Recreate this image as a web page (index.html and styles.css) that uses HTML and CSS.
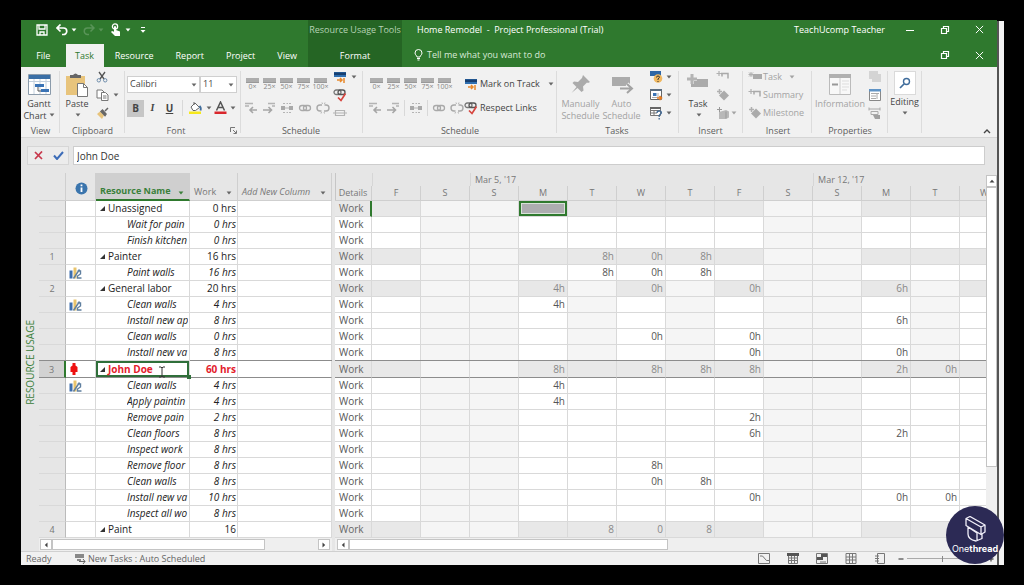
FILE: index.html
```html
<!DOCTYPE html>
<html lang="en">
<head>
<meta charset="utf-8">
<title>Home Remodel - Project Professional (Trial)</title>
<link rel="stylesheet" href="styles.css">
</head>
<body>
<svg class="defs" aria-hidden="true">
  <symbol id="down" viewBox="0 0 6 4"><path d="M.6.6h4.8L3 3.4z" fill="currentColor"/></symbol>
  <symbol id="restore" viewBox="0 0 10 10"><path d="M1.500 3.500h5v5h-5zM3.500 3v-1.500h5v5h-1.500" fill="none" stroke="currentColor" stroke-width="1.200"/></symbol>
  <symbol id="close" viewBox="0 0 10 10"><path d="M1 1l8 8M9 1l-8 8" stroke="currentColor" stroke-width="1.100"/></symbol>
  <symbol id="outdent" viewBox="0 0 14 14"><path d="M1 2.500h8M1 5h4" stroke="#b4b4b4" stroke-width="1.300"/><path d="M13 9H6.500M9 6L6 9l3 3" fill="none" stroke="#a6a6a6" stroke-width="1.600"/></symbol>
  <symbol id="indent" viewBox="0 0 14 14"><path d="M6 2.500h7M10 5h3" stroke="#b4b4b4" stroke-width="1.300"/><path d="M1 9h8M6.500 6l3 3-3 3" fill="none" stroke="#a6a6a6" stroke-width="1.600"/></symbol>
  <symbol id="split" viewBox="0 0 14 14"><path d="M1 5h4v4H1zM9 5h4v4H9z" fill="#a9a9a9"/><path d="M5 7h4M3 2.500h2M6.500 2.500h1.500M9 2.500h2M3 11.500h2M6.500 11.500h1.500M9 11.500h2" stroke="#b4b4b4"/></symbol>
  <symbol id="link" viewBox="0 0 14 14"><rect x="1.500" y="4.500" width="7" height="5" rx="2.500" fill="none" stroke="#a9a9a9" stroke-width="1.300"/><rect x="5.500" y="4.500" width="7" height="5" rx="2.500" fill="none" stroke="#a9a9a9" stroke-width="1.300"/></symbol>
  <symbol id="unlink" viewBox="0 0 14 14"><path d="M6 4H4a3 3 0 0 0 0 6h1.500M8.500 4H10a3 3 0 0 1 0 6H8" fill="none" stroke="#a9a9a9" stroke-width="1.400"/><path d="M6 1.500l.5 1.500M9 1.500L8.500 3M5 12.500l.5-1.500M8.500 12.500L8 11" stroke="#b4b4b4"/></symbol>
  <symbol id="mark" viewBox="0 0 14 14"><path d="M1 2h12v5H1z" fill="#2f6fb0"/><path d="M1 2.500h12v2.500H1z" fill="#173f70"/><path d="M4 10h5M7 8l2 2-2 2M11 8v5" fill="none" stroke="#e8892b" stroke-width="1.500"/></symbol>
  <symbol id="respect" viewBox="0 0 14 14"><rect x="1" y="2" width="7" height="4.500" rx="2.200" fill="none" stroke="#777" stroke-width="1.300"/><rect x="5" y="2" width="7" height="4.500" rx="2.200" fill="none" stroke="#555" stroke-width="1.300"/><path d="M5 9.500l3 3 4.500-7" fill="none" stroke="#d6453f" stroke-width="1.700"/></symbol>
  <symbol id="inactive" viewBox="0 0 14 14"><path d="M2.500 4.500h9v5h-9zM0 7h14" fill="none" stroke="#b4b4b4" stroke-width="1.200"/></symbol>
  <symbol id="summary" viewBox="0 0 14 14"><path d="M3 1v5M.5 3.500h5" stroke="#b0b0b0" stroke-width="1.200"/><path d="M5 3.500h7v5M6 3.500v3" fill="none" stroke="#a9a9a9" stroke-width="1.500"/></symbol>
  <symbol id="milestone" viewBox="0 0 14 14"><path d="M8 2.500l5 5-5 5-5-5z" fill="#ababab"/><path d="M3.500 1v5M1 3.500h5" stroke="#b0b0b0" stroke-width="1.500"/></symbol>
  <symbol id="addtask" viewBox="0 0 14 14"><path d="M5 4h9v5H5z" fill="#ababab"/><path d="M3 2v5M.5 4.500h5M1 2.500l4 4M5 2.500l-4 4" stroke="#b0b0b0"/></symbol>
  <symbol id="deliver" viewBox="0 0 14 14"><path d="M3 6l7-2 3 1.500v6l-3 1.500H3z" fill="#b8b8b8"/><path d="M3.500 1v5M1 3.500h5M10 5.500v7" stroke="#999"/></symbol>
  <symbol id="assign" viewBox="0 0 13 12"><path d="M.5 3.500h3v8h-3z" fill="#3e6fae"/><path d="M4.500.5h3v11h-3z" fill="#e9c46c"/><path d="M4.500 11.500l6-9M8.500 4h3v3l-3 2v2h4" fill="none" stroke="#5f7f9f" stroke-width="1.400"/></symbol>
  <symbol id="over" viewBox="0 0 8 14"><path d="M2.500 1h3v2.500L7.500 5v5H5.500v3h-3v-3h-2V5l2-1.500z" fill="#ee1111"/></symbol>
</svg>

<div class="screen">
<main class="app">
  <header class="head">
    <div class="head-left">
      <div class="quick">
        <button aria-label="Save"><svg width="12" height="12" viewBox="0 0 12 12"><path d="M1 1h10v10H1zM3 1v4h6V1M4 11V8h4v3" fill="none" stroke="#fff" stroke-width="1.300"/></svg></button>
        <button class="wide" aria-label="Undo"><svg width="12" height="12" viewBox="0 0 12 12"><path d="M1 4h6.500a3 3 0 0 1 0 6.500H6M4.500.5L1 4l3.500 3.500" fill="none" stroke="#fff" stroke-width="1.700"/></svg><svg class="dn"><use href="#down"/></svg></button>
        <button class="wide faded" aria-label="Redo"><svg width="12" height="12" viewBox="0 0 12 12"><path d="M11 4H4.500a3 3 0 0 0 0 6.500H6M7.500.5L11 4 7.500 7.500" fill="none" stroke="#fff" stroke-width="1.500"/></svg><svg class="dn"><use href="#down"/></svg></button>
        <button class="wide" aria-label="Touch or mouse mode"><svg width="12" height="14" viewBox="0 0 12 14"><circle cx="5" cy="3.500" r="2.600" fill="none" stroke="#fff" stroke-width="1.300"/><path d="M4 3.500q1-1 2 0V7l4 1.500V13H5L1 9l1-1 2 .8z" fill="#fff"/></svg><svg class="dn"><use href="#down"/></svg></button>
        <button aria-label="Customize toolbar"><svg width="6" height="8" viewBox="0 0 6 8"><path d="M1 1.500h4" stroke="#fff"/><path d="M.5 4h5L3 6.800z" fill="#fff"/></svg></button>
      </div>
      <nav class="tabs">
        <button>File</button><button class="on">Task</button><button>Resource</button><button>Report</button><button>Project</button><button>View</button>
      </nav>
    </div>
    <div class="context">
      <span>Resource Usage Tools</span>
      <button>Format</button>
    </div>
    <div class="head-right">
      <div class="line">
        <h1>Home Remodel&nbsp; -&nbsp; Project Professional (Trial)</h1>
        <span class="user">TeachUcomp Teacher</span>
        <button aria-label="Minimize"><svg width="10" height="10" viewBox="0 0 10 10"><path d="M1 5.500h8" stroke="#fff"/></svg></button>
        <button aria-label="Restore"><svg width="10" height="10"><use href="#restore"/></svg></button>
        <button aria-label="Close"><svg width="9" height="9"><use href="#close"/></svg></button>
      </div>
      <div class="line">
        <button class="tell"><svg width="9" height="12" viewBox="0 0 9 12"><path d="M3 8C3 6.500 1 6 1 4a3.500 3.500 0 0 1 7 0c0 2-2 2.500-2 4zM3 9.500h3M3.500 11h2" fill="none" stroke="#fff"/></svg>Tell me what you want to do</button>
        <button aria-label="Restore document"><svg width="10" height="10"><use href="#restore"/></svg></button>
        <button aria-label="Close document"><svg width="9" height="9"><use href="#close"/></svg></button>
      </div>
    </div>
  </header>

  <section class="ribbon" aria-label="Task ribbon">
    <div class="group g-view">
      <div class="tools">
        <button class="big"><svg width="26" height="24" viewBox="0 0 26 24"><path d="M2.500 1.500h22v20h-22z" fill="#fff" stroke="#8b9bab"/><path d="M3 2h21v4H3z" fill="#3a6ea5"/><path d="M3 8.500h21M8 6v15M14 6v15M20 6v15" stroke="#c3d0dd"/><path d="M9 11h9v3H9zM15 16h8v3h-8z" fill="#3a73b5"/><path d="M12 14v4h3" fill="none" stroke="#555"/></svg><span>Gantt<br>Chart<svg class="dn"><use href="#down"/></svg></span></button>
      </div>
      <h2>View</h2>
    </div>
    <div class="group g-clip">
      <div class="tools">
        <button class="big"><svg width="24" height="24" viewBox="0 0 24 24"><path d="M1 3h19v19H1z" fill="#e8c47c"/><path d="M5 2h3q2.500-3 5 0h3v3H5z" fill="#666"/><path d="M12.500 10.500h6l4 4v9h-10z" fill="#fff" stroke="#777"/><path d="M18.500 10.500v4h4" fill="none" stroke="#777"/></svg><span>Paste<br><svg class="dn"><use href="#down"/></svg></span></button>
        <div class="stack">
          <button aria-label="Cut"><svg width="12" height="12" viewBox="0 0 12 12"><path d="M3 1l5 7M9 1L4 8" stroke="#555" stroke-width="1.300"/><circle cx="2.800" cy="9.300" r="1.700" fill="none" stroke="#6d8cab"/><circle cx="9.200" cy="9.300" r="1.700" fill="none" stroke="#6d8cab"/></svg></button>
          <button aria-label="Copy"><svg width="13" height="12" viewBox="0 0 13 12"><path d="M1 1h5l2 2v6H1z" fill="#fff" stroke="#777"/><path d="M5.500 3.500h4l2.500 2.500v5.500H5.500zM7 7h3.500M7 9h3.500" fill="#fff" stroke="#777"/></svg><svg class="dn"><use href="#down"/></svg></button>
          <button aria-label="Format Painter"><svg width="13" height="13" viewBox="0 0 13 13"><path d="M1 7l3-2.500 4 4L6 12z" fill="#e8c47c"/><path d="M5 4.500l4 4 1-1.500-3.500-4zM9 4l3-3" fill="#666" stroke="#666" stroke-width="1.500"/></svg></button>
        </div>
      </div>
      <h2>Clipboard</h2>
    </div>
    <div class="group g-font">
      <div class="tools rows">
        <div class="row joined">
          <label class="pick face"><select aria-label="Font"><option>Calibri</option></select><svg class="dn"><use href="#down"/></svg></label>
          <label class="pick size"><select aria-label="Font size"><option>11</option></select><svg class="dn"><use href="#down"/></svg></label>
        </div>
        <div class="row">
          <button class="fmt on"><b>B</b></button><button class="fmt"><i>I</i></button><button class="fmt"><u>U</u></button>
          <span class="sep"></span>
          <button class="color" aria-label="Background Color"><svg width="15" height="14" viewBox="0 0 15 14"><path d="M1 10.500h12V13H1z" fill="#f6e81c"/><path d="M3 6l4-4 4.500 4.500L7.500 9.500H5zM6 1v3" fill="#fff" stroke="#666"/><path d="M11.500 5q2 2 1 4.500" fill="none" stroke="#3f6c9b" stroke-width="1.800"/></svg><svg class="dn"><use href="#down"/></svg></button>
          <button class="color" aria-label="Font Color"><svg width="13" height="14" viewBox="0 0 13 14"><path d="M.5 10.500h12V13H.5z" fill="#d9262c"/><path d="M2.500 9.500L6.500 1l4 8.500M4 6.500h5" fill="none" stroke="#555" stroke-width="1.500"/></svg><svg class="dn"><use href="#down"/></svg></button>
        </div>
      </div>
      <h2>Font</h2>
      <button class="launch" aria-label="Font settings"><svg width="7" height="7" viewBox="0 0 7 7"><path d="M.5 5V.5H5M3 3l3 3M6.500 3.500v3h-3" fill="none" stroke="#777"/></svg></button>
    </div>
    <div class="group g-sched">
      <div class="tools">
        <div class="rows">
          <div class="row pcts">
            <button><i class="bar"></i>0×</button><button><i class="bar"></i>25×</button><button><i class="bar"></i>50×</button><button><i class="bar"></i>75×</button><button><i class="bar"></i>100×</button>
          </div>
          <div class="row fives">
            <button aria-label="Outdent"><svg class="ic"><use href="#outdent"/></svg></button><button aria-label="Indent"><svg class="ic"><use href="#indent"/></svg></button><button aria-label="Split"><svg class="ic"><use href="#split"/></svg></button><button aria-label="Link"><svg class="ic"><use href="#link"/></svg></button><button aria-label="Unlink"><svg class="ic"><use href="#unlink"/></svg></button>
          </div>
        </div>
        <div class="stack">
          <button aria-label="Mark on Track"><svg class="ic"><use href="#mark"/></svg><svg class="dn"><use href="#down"/></svg></button>
          <button aria-label="Respect Links"><svg class="ic"><use href="#respect"/></svg></button>
          <button aria-label="Inactivate"><svg class="ic"><use href="#inactive"/></svg></button>
        </div>
      </div>
      <h2>Schedule</h2>
    </div>
    <div class="group g-sched2">
      <div class="tools">
        <div class="rows">
          <div class="row pcts">
            <button><i class="bar"></i>0×</button><button><i class="bar"></i>25×</button><button><i class="bar"></i>50×</button><button><i class="bar"></i>75×</button><button><i class="bar"></i>100×</button>
          </div>
          <div class="row fives">
            <button aria-label="Outdent"><svg class="ic"><use href="#outdent"/></svg></button><button aria-label="Indent"><svg class="ic"><use href="#indent"/></svg></button><span class="sep"></span><button aria-label="Split"><svg class="ic"><use href="#split"/></svg></button><span class="sep"></span><button aria-label="Link"><svg class="ic"><use href="#link"/></svg></button><button aria-label="Unlink"><svg class="ic"><use href="#unlink"/></svg></button>
          </div>
        </div>
        <div class="rows words">
          <div class="row"><button><svg class="ic"><use href="#mark"/></svg>Mark on Track<svg class="dn far"><use href="#down"/></svg></button></div>
          <div class="row"><button><svg class="ic"><use href="#respect"/></svg>Respect Links</button></div>
        </div>
      </div>
      <h2>Schedule</h2>
    </div>
    <div class="group g-tasks">
      <div class="tools">
        <button class="big off"><svg width="22" height="24" viewBox="0 0 22 24"><path d="M13 2l7 7-2 1-1-.5-4 4 .5 4-2 1.500-4-4-6 5 5-6-4-4L4 8.500l4 .5 4-4z" fill="#ababab"/></svg><span>Manually<br>Schedule</span></button>
        <button class="big off"><svg width="24" height="24" viewBox="0 0 24 24"><path d="M2 4h18v9H2z" fill="#ababab"/><path d="M10 15.500h11M17 11l5 4.500-5 4.500" fill="none" stroke="#f1f1f1" stroke-width="4"/><path d="M10 15.500h11M17 11l5 4.500-5 4.500" fill="none" stroke="#a3a3a3" stroke-width="2"/></svg><span>Auto<br>Schedule</span></button>
        <div class="stack">
          <button aria-label="Inspect"><svg class="ic" viewBox="0 0 14 14"><path d="M1 1h11v5H1z" fill="#2e66a5"/><circle cx="9" cy="8.500" r="4.300" fill="#f0b860"/><path d="M7.500 7.500q0-1.500 1.500-1.500t1.500 1.300L9 9v1M9 11v1" fill="none" stroke="#333"/></svg><svg class="dn"><use href="#down"/></svg></button>
          <button aria-label="Move"><svg class="ic" viewBox="0 0 14 14"><path d="M1.500 1.500h11v10h-11z" fill="#fff" stroke="#666"/><path d="M1 1h12v2H1z" fill="#5b6d80"/><path d="M4 5h3.500v3H4z" fill="#3a73b5"/><path d="M9 5v5M3 9.500h5" stroke="#aaa"/><path d="M8 10h4M10.500 8l2 2-2 2" fill="none" stroke="#e57a1f" stroke-width="1.600"/></svg><svg class="dn"><use href="#down"/></svg></button>
          <button aria-label="Mode"><svg class="ic" viewBox="0 0 14 14"><path d="M1.500 1.500h10v8h-10zM1 4.500h10M1 7h7M5 4v5" fill="#fff" stroke="#777"/><path d="M1 1h11v2H1z" fill="#666"/><path d="M8 7q0-2 2.200-2t2.200 2L10.200 9.500V11M10.200 12v1.500" fill="none" stroke="#436a94" stroke-width="1.300"/></svg><svg class="dn"><use href="#down"/></svg></button>
        </div>
      </div>
      <h2>Tasks</h2>
    </div>
    <div class="group g-insert">
      <div class="tools">
        <button class="big"><svg width="24" height="24" viewBox="0 0 24 24"><path d="M5 6h17v8H5z" fill="#ababab"/><path d="M6 1v10M1 6h10" stroke="#f1f1f1" stroke-width="4"/><path d="M6 1v10M1 6h10" stroke="#b4b4b4" stroke-width="3"/></svg><span>Task<br><svg class="dn"><use href="#down"/></svg></span></button>
        <div class="stack">
          <button aria-label="Summary"><svg class="ic"><use href="#summary"/></svg></button>
          <button aria-label="Milestone"><svg class="ic"><use href="#milestone"/></svg></button>
          <button class="off" aria-label="Deliverable"><svg class="ic"><use href="#deliver"/></svg><svg class="dn"><use href="#down"/></svg></button>
        </div>
      </div>
      <h2>Insert</h2>
    </div>
    <div class="group g-insert2">
      <div class="tools">
        <div class="stack off">
          <button><svg class="ic"><use href="#addtask"/></svg>Task<svg class="dn far"><use href="#down"/></svg></button>
          <button><svg class="ic"><use href="#summary"/></svg>Summary</button>
          <button><svg class="ic"><use href="#milestone"/></svg>Milestone</button>
        </div>
      </div>
      <h2>Insert</h2>
    </div>
    <div class="group g-props">
      <div class="tools">
        <button class="big off"><svg width="24" height="24" viewBox="0 0 24 24"><path d="M1.500 1.500h21v20h-21z" fill="#f8f8f8" stroke="#bbb"/><path d="M1 1h22v4H1z" fill="#b0b0b0"/><path d="M12 5v16" stroke="#ccc"/><path d="M4 11.500h6" stroke="#999" stroke-width="2"/><path d="M14 8h7M14 11h7M14 14h7M14 17h5" stroke="#ddd"/></svg><span>Information</span></button>
        <div class="stack">
          <button aria-label="Notes"><svg class="ic" viewBox="0 0 14 14"><path d="M1 1h9v8H1zM4 4h9v8H4z" fill="#d4d4d4"/></svg></button>
          <button aria-label="Details"><svg class="ic" viewBox="0 0 14 14"><path d="M1.500 1.500h11v11h-11z" fill="#fff" stroke="#888"/><path d="M1 1h12v2.500H1z" fill="#5f93c5"/><path d="M3 5.500h8M3 8h5M3 10.500h5M9 6v5" stroke="#aaa"/></svg></button>
          <button aria-label="Add to Timeline"><svg class="ic" viewBox="0 0 14 14"><path d="M1 1.500v3M12 1.500v3M1 3h11M3 5.500h7v3H3z" fill="none" stroke="#aaa"/><path d="M5 9h7v4H7z" fill="#a0a0a0"/></svg></button>
        </div>
      </div>
      <h2>Properties</h2>
    </div>
    <div class="group g-edit">
      <div class="tools">
        <button class="big"><span class="lens"><svg width="12" height="12" viewBox="0 0 12 12"><circle cx="7.500" cy="4.500" r="3" fill="none" stroke="#3f6c9b" stroke-width="1.400"/><path d="M5 7l-4 4" stroke="#3f6c9b" stroke-width="1.700"/></svg></span><span>Editing<br><svg class="dn"><use href="#down"/></svg></span></button>
      </div>
    </div>
    <button class="collapse" aria-label="Collapse ribbon"><svg width="8" height="6" viewBox="0 0 8 6"><path d="M1 5l3-3 3 3" fill="none" stroke="#444" stroke-width="1.400"/></svg></button>
  </section>

  <section class="entry">
    <div class="confirm">
      <button aria-label="Cancel"><svg width="9" height="9" viewBox="0 0 9 9"><path d="M1 1l7 7M8 .5L1 8" stroke="#c8384c" stroke-width="1.700"/></svg></button>
      <button aria-label="Enter"><svg width="11" height="9" viewBox="0 0 11 9"><path d="M1 4.500L4 8l6-7" fill="none" stroke="#3c6cb8" stroke-width="2"/></svg></button>
    </div>
    <input type="text" aria-label="Entry" value="John Doe">
  </section>

  <section class="work">
    <div class="viewname"><span>RESOURCE USAGE</span></div>
    <div class="pane sheet">
      <table>
        <colgroup><col class="c-id"><col class="c-ind"><col class="c-name"><col class="c-work"><col></colgroup>
        <thead><tr>
          <th></th>
          <th class="info"><svg width="13" height="13" viewBox="0 0 13 13"><circle cx="6.500" cy="6.500" r="6" fill="#3b75ad"/><path d="M6.500 2.500v1.800M6.500 5.500V10" stroke="#fff" stroke-width="1.800"/></svg></th>
          <th class="name">Resource Name<svg class="dn"><use href="#down"/></svg></th>
          <th>Work<svg class="dn"><use href="#down"/></svg></th>
          <th class="add">Add New Column<svg class="dn"><use href="#down"/></svg></th>
        </tr></thead>
        <tbody id="sheet"></tbody>
      </table>
      <div class="hscroll"><button aria-label="Scroll left"><svg width="4" height="6" viewBox="0 0 4 6"><path d="M3.500.5v5L.8 3z" fill="#444"/></svg></button><i class="thumb"></i><i class="track"></i><button aria-label="Scroll right"><svg width="4" height="6" viewBox="0 0 4 6"><path d="M.5.5v5L3.200 3z" fill="#444"/></svg></button></div>
    </div>
    <div class="pane usage">
      <div class="clip">
        <table>
          <colgroup><col class="c-det"><col span="13" class="c-day"></colgroup>
          <thead>
            <tr class="weeks"><th></th><th colspan="2"></th><th colspan="7">Mar 5, '17</th><th colspan="4">Mar 12, '17</th></tr>
            <tr class="days" id="days"><th>Details</th></tr>
          </thead>
          <tbody id="usage"></tbody>
        </table>
      </div>
      <div class="hscroll"><button aria-label="Scroll left"><svg width="4" height="6" viewBox="0 0 4 6"><path d="M3.500.5v5L.8 3z" fill="#444"/></svg></button><i class="thumb"></i><i class="track"></i></div>
    </div>
    <div class="vscroll"><button aria-label="Scroll up"><svg width="6" height="4" viewBox="0 0 6 4"><path d="M.5 3.500h5L3 .8z" fill="#444"/></svg></button><i class="thumb"></i><i class="track"></i></div>
  </section>

  <footer class="status">
    <span class="ready">Ready</span>
    <span class="mode"><svg width="11" height="10" viewBox="0 0 11 10"><path d="M0 0h9v4H0zM2 5h4v2H2z" fill="#888"/><path d="M4 7.500h6M8 5l2 2.500L8 10" fill="none" stroke="#666"/></svg>New Tasks : Auto Scheduled</span>
    <button aria-label="Gantt Chart"><svg width="12" height="11" viewBox="0 0 12 11"><path d="M.5.5h11v10H.5zM2 3h2.500l4 4.500H11" fill="none" stroke="#777"/></svg></button>
    <button aria-label="Task Usage"><svg width="12" height="11" viewBox="0 0 12 11"><path d="M1.500.5h9v10h-9zM1 5h10M1 7.500h10M4.500 3v7M7.500 3v7" fill="none" stroke="#777"/><path d="M0 0h12v3H0z" fill="#555"/></svg></button>
    <button aria-label="Team Planner"><svg width="12" height="11" viewBox="0 0 12 11"><path d="M.5.5h11v10H.5z" fill="none" stroke="#777"/><path d="M5 1h6v3H5zM1 4h6v3H1z" fill="#555"/><path d="M4 9h6" stroke="#777"/></svg></button>
    <button aria-label="Resource Sheet"><svg width="12" height="11" viewBox="0 0 12 11"><path d="M1 .5h10v10H1zM1 4h10M1 7h10M4.500.5v10M7.500.5v10" fill="none" stroke="#777"/></svg></button>
    <button aria-label="Report"><svg width="12" height="11" viewBox="0 0 12 11"><path d="M3.500.5h7v10h-7zM1 3h4M1 5.500h4M1 8h4" fill="none" stroke="#777"/></svg></button>
    <button class="minus" aria-label="Zoom out"><svg width="6" height="6" viewBox="0 0 6 6"><path d="M.5 3h5" stroke="#555" stroke-width="1.300"/></svg></button>
    <input type="range" aria-label="Zoom" value="46">
    <button class="plus" aria-label="Zoom in"><svg width="6" height="6" viewBox="0 0 6 6"><path d="M.5 3h5M3 .5v5" stroke="#555" stroke-width="1.300"/></svg></button>
  </footer>
</main>
<div class="edge"></div>
<div class="badge">
  <svg width="24" height="28" viewBox="0 0 24 28"><path d="M3 2.500l4-2L22 9v7l-4 2.500L3 9.500zM3 2.500L18 11l4-2M18 11v7.500M5 11v7c0 4 3 6 8 7l6-2.500v-4.500M14 17v8M5 11l9 6" fill="none" stroke="#f2f0fa" stroke-width="1.300" stroke-linejoin="round"/></svg>
  <span>One<b>thread</b></span>
</div>
</div>
<script src="app.js"></script>
</body>
</html>
```
FILE: styles.css
```css
* { box-sizing: border-box; }
body { margin: 0; background: #000; color: #444; font: 9px/12px "Open Sans", "Noto Sans", sans-serif; }
h1, h2 { margin: 0; font-size: 9px; font-weight: 400; }
button { display: flex; align-items: center; justify-content: center; margin: 0; padding: 0; border: 0; background: none; color: inherit; font: inherit; }
svg { flex: none; display: block; }
.defs { position: absolute; width: 0; height: 0; }
.dn { width: 6px; height: 4px; color: #666; }
.ic { width: 14px; height: 14px; }
.rows, .stack { display: flex; flex-direction: column; }
.row { display: flex; align-items: center; height: 24px; }
.sep { width: 1px; height: 16px; background: #d8d8d8; }

.screen { position: relative; display: flex; padding: 20px 20px 20px 21px; }
.app { flex: 1; min-width: 0; display: flex; flex-direction: column; background: #e6e6e6; }
.edge { width: 7px; margin-top: 1px; background: #f2f2f2; border-left: 2px solid #555; }

/* title bar and tabs */
.head { display: flex; height: 47px; background: #2f792e; color: #fff; }
.head button { color: #fff; }
.head .dn { color: #fff; }
.head-left { width: 287px; }
.quick { display: flex; align-items: center; height: 24px; padding: 0 0 4px 14px; gap: 5px; }
.quick button { width: 14px; height: 16px; }
.quick .wide { width: 20px; gap: 3px; margin-left: 2px; }
.quick button:last-child { margin-left: 1px; }
.faded { opacity: .2; }
.tabs { display: flex; height: 23px; }
.tabs button { padding: 0 11px; }
.tabs button:first-child { width: 45px; }
.tabs .on { width: 39px; padding: 0; background: #f1f1f1; color: #2f792e; }
.head .tabs .on { color: #2f792e; }
.context { width: 94px; display: flex; flex-direction: column; background: #256524; text-align: center; }
.context span { height: 24px; padding-top: 4px; color: #b5d3b4; white-space: nowrap; }
.context button { height: 23px; }
.head-right { flex: 1; display: flex; flex-direction: column; }
.line { display: flex; align-items: center; height: 24px; }
.line:first-child { padding-bottom: 4px; }
.line h1 { margin-left: 15px; white-space: nowrap; }
.line button { width: 35px; height: 18px; }
.user { margin-left: auto; margin-right: 7px; white-space: nowrap; }
.line .tell { width: auto; margin: 0 auto 0 12px; gap: 4px; color: #d9ead8; white-space: nowrap; }

/* ribbon */
.ribbon { display: flex; height: 71px; background: #f1f1f1; border-bottom: 1px solid #d5d5d5; }
.group { position: relative; flex: none; display: flex; flex-direction: column; }
.group::after { content: ""; position: absolute; right: 0; top: 4px; bottom: 4px; width: 1px; background: #dcdcdc; }
.tools { display: flex; flex: none; height: 58px; }
.tools.rows, .tools > .rows { padding-top: 5px; }
.group h2 { text-align: center; color: #5d5d5d; }
.big { flex-direction: column; justify-content: flex-start; padding-top: 6px; gap: 1px; line-height: 12px; white-space: nowrap; }
.big .dn { display: inline-block; vertical-align: 2px; margin-left: 2px; }
.off, .off .dn { color: #a3a3a3; }
.stack { padding-top: 1px; }
.stack button { height: 18px; justify-content: flex-start; gap: 4px; white-space: nowrap; }
.g-view { width: 39px; }
.g-view .big { width: 36px; }
.g-clip { width: 65px; }
.g-clip .big { width: 34px; }
.g-clip .stack { margin-left: 2px; }
.g-font { width: 116px; }
.g-font .tools { padding-left: 2px; }
.g-font h2 { padding-right: 14px; }
.pick { position: relative; display: block; height: 17px; }
.pick select { appearance: none; width: 100%; height: 100%; padding: 0 2px; border: 1px solid #cfcfcf; border-radius: 0; background: #fff; color: #444; font: inherit; }
.pick .dn { position: absolute; right: 3px; top: 7px; }
.face { width: 73px; }
.size { width: 37px; }
.fmt { width: 17px; height: 17px; font-size: 10px; }
.fmt + .sep { margin: 0 4px; }
.fmt.on { background: #c6c6c6; }
.fmt i { font-family: "Liberation Serif", serif; font-weight: 700; }
.fmt u { font-weight: 700; }
.color { width: 25px; gap: 3px; }
.launch { position: absolute; right: 4px; bottom: 3px; }
.g-sched { width: 122px; padding-left: 3px; }
.g-sched h2, .g-sched2 h2 { padding-right: 5px; }
.pcts button { flex-direction: column; width: 17px; color: #888; font-size: 7px; line-height: 8px; }
.bar { width: 13px; height: 5px; background: #adadad; border-bottom: 1px solid #999; }
.g-sched .fives { gap: 4px; }
.g-sched .stack { margin-left: 3px; }
.g-sched2 { width: 194px; padding-left: 5px; }
.g-sched2 .fives { gap: 4px; }
.words button { gap: 2px; white-space: nowrap; }
.dn.far { margin-left: 6px; }
.g-tasks { width: 122px; padding-left: 3px; }
.g-tasks h2 { padding-right: 5px; }
.g-tasks .big { width: 41px; }
.g-tasks .stack { margin-left: 7px; }
.g-tasks .stack button { gap: 3px; }
.g-insert { width: 64px; padding-left: 3px; }
.g-insert h2, .g-insert2 h2 { padding-right: 4px; }
.g-insert .big { width: 32px; }
.g-insert .stack { margin-left: 2px; }
.g-insert .stack button { gap: 1px; }
.g-insert2 { width: 69px; padding-left: 5px; }
.g-insert2 .stack button { gap: 1px; }
.g-props { width: 76px; }
.g-props .big { width: 56px; }
.g-edit { width: 34px; }
.g-edit .big { width: 33px; padding-top: 4px; }
.lens { display: flex; align-items: center; justify-content: center; width: 22px; height: 24px; background: #fff; border: 1px solid #dadada; }
.collapse { margin: auto 5px 2px auto; width: 10px; height: 8px; }

/* entry bar */
.entry { display: flex; gap: 4px; height: 35px; padding: 8px 12px 8px 6px; }
.confirm { display: flex; width: 42px; border: 1px solid #d6d6d6; background: #ececec; }
.confirm button { flex: 1; }
.entry input { flex: 1; min-width: 0; padding: 0 3px; border: 1px solid #cdcdcd; background: #fff; color: #333; font: 10px "Open Sans", sans-serif; }

/* sheets */
.work { display: flex; }
.viewname { display: flex; align-items: center; justify-content: center; width: 18px; color: #3a803a; font-size: 10px; }
.viewname span { writing-mode: vertical-rl; transform: rotate(180deg); white-space: nowrap; }
.pane { display: flex; flex-direction: column; }
.sheet { width: 293px; }
.usage { flex: 1; min-width: 0; border-left: 3px solid #e6e6e6; box-shadow: inset 1px 0 #c6c6c6; }
.clip { overflow: hidden; display: flex; }
table { border-collapse: separate; border-spacing: 0; table-layout: fixed; font-size: 10px; line-height: 15px; }
.sheet table { width: 293px; }
.usage table { flex: none; width: 674px; }
.c-id { width: 27px; }
.c-ind { width: 30px; }
.c-name { width: 94px; }
.c-work { width: 48px; }
.c-det { width: 37px; }
.c-day { width: 49px; }
th, td { padding: 0; height: 16px; border: 0 solid #d9d9d9; border-width: 0 1px 1px 0; font-weight: 400; white-space: nowrap; }
.sheet th { position: relative; height: 28px; padding: 9px 0 0 4px; text-align: left; color: #777; border-color: #cfcfcf; font-size: 9px; }
.sheet th .dn { position: absolute; right: 5px; bottom: 5px; }
.sheet th.info { padding: 4px 0 0 9px; }
.sheet th.name { background: #cfcfcf; color: #3a803a; font-weight: 700; border-bottom: 2px solid #2f792e; }
.sheet th.name .dn { bottom: 4px; color: #3a803a; }
.sheet th.add { font-style: italic; }
.sheet td { background: #fff; color: #222; }
.sheet td:first-child { background: #e6e6e6; color: #777; font-size: 9px; text-align: center; border-right-color: #bbb; }
.sheet td:nth-child(2) svg { margin-left: 3px; }
.sheet td:nth-child(4) { padding-right: 1px; text-align: right; }
.nm { display: block; overflow: hidden; margin: 0 1px 0 4px; }
.nm svg { display: inline-block; margin-right: 3px; vertical-align: 1px; }
.child .nm { margin-left: 31px; }
.sheet .child td { font-style: italic; }
.picked td { height: 17px; border-bottom-color: #8c8c8c; box-shadow: 0 -1px #8c8c8c; }
.sheet .picked td:first-child { background: #d2d2d2; border-right: 2px solid #2f792e; }
.sheet .picked td:nth-child(3), .sheet .picked td:nth-child(4) { color: #e3202b; font-weight: 700; }
.sheet .picked td:nth-child(3) { position: relative; box-shadow: inset 0 0 0 2px #2f6f3a; }
.sheet .picked td:nth-child(3)::after { content: ""; position: absolute; right: -2px; bottom: -2px; width: 4px; height: 4px; background: #2f6f3a; }
.caret { position: absolute; left: 62px; top: 5px; }
.usage th { color: #777; border-color: #cfcfcf; }
.usage .weeks th { height: 13px; padding-left: 4px; border-width: 0 0 0 1px; border-color: #d6d6d6; text-align: left; font-size: 9px; line-height: 13px; }
.usage .weeks th:first-child { border: 0; }
.usage .days th { height: 15px; font-size: 9px; line-height: 14px; }
.usage td { background: #fff; padding-right: 2px; color: #555; text-align: right; }
.usage td:first-child { padding-left: 4px; text-align: left; }
.usage .sum td { background: #e8e8e8; color: #888; }
.usage td.idle, .usage .sum td.idle { background: #f5f5f5; }
.usage .sum td:first-child { color: #666; }
.usage tr.first td:first-child { border-right: 2px solid #2f792e; }
.usage .sum td.cursor { background: #adadb0; box-shadow: inset 0 0 0 2px #2f792e, inset 0 0 0 3px #d8e2d8; }

/* scroll bars */
.hscroll { display: flex; height: 13px; padding: 1px 2px 1px 1px; background: #efefef; }
.hscroll button { width: 12px; border: 1px solid #c4c4c4; background: #fff; }
.hscroll .thumb { flex: 0 0 213px; border: 1px solid #c4c4c4; background: #fff; }
.usage .hscroll { padding-left: 2px; }
.usage .hscroll .thumb { flex-basis: 319px; }
.track { flex: 1; }
.vscroll { display: flex; flex-direction: column; width: 11px; padding-top: 2px; }
.vscroll button { height: 12px; border: 1px solid #c4c4c4; background: #fff; }
.vscroll .thumb { flex: 0 0 280px; border: 1px solid #c4c4c4; background: #fff; }
.vscroll .track { background: #efefef; }

/* status bar */
.status { display: flex; align-items: center; height: 14px; padding: 0 0 0 5px; border-top: 1px solid #d0d0d0; background: #f1f1f1; color: #666; }
.ready { width: 49px; }
.mode { display: flex; align-items: center; gap: 2px; margin-right: auto; white-space: nowrap; }
.status button { width: 29px; }
.status .minus { width: 13px; }
.status .plus { width: 12px; }
.status input { appearance: none; width: 78px; height: 12px; margin: 0; background: linear-gradient(#aaa, #aaa) center / 100% 1px no-repeat; }
.status input::-webkit-slider-thumb { appearance: none; width: 1px; height: 6px; background: #888; }

.badge { position: absolute; right: 20px; bottom: 21px; display: flex; flex-direction: column; align-items: center; width: 58px; height: 58px; padding-top: 10px; border-radius: 50%; background: #2c2a55; color: #fff; font: 9px/10px "Inter", sans-serif; }
```
FILE: app.js
```js
// name, work, values keyed by day column, optional row id / indicator
const rows = [
  { name: "Unassigned", work: "0 hrs", sum: 1 },
  { name: "Wait for pain", work: "0 hrs" },
  { name: "Finish kitchen", work: "0 hrs" },
  { id: 1, name: "Painter", work: "16 hrs", sum: 1, v: { 4: "8h", 5: "0h", 6: "8h" } },
  { name: "Paint walls", work: "16 hrs", icon: "assign", v: { 4: "8h", 5: "0h", 6: "8h" } },
  { id: 2, name: "General labor", work: "20 hrs", sum: 1, part: 1, v: { 3: "4h", 5: "0h", 7: "0h", 10: "6h" } },
  { name: "Clean walls", work: "4 hrs", icon: "assign", part: 1, v: { 3: "4h" } },
  { name: "Install new ap", work: "8 hrs", part: 1, v: { 10: "6h" } },
  { name: "Clean walls", work: "0 hrs", part: 1, v: { 5: "0h", 7: "0h" } },
  { name: "Install new va", work: "8 hrs", part: 1, v: { 7: "0h", 10: "0h" } },
  { id: 3, name: "John Doe", work: "60 hrs", sum: 1, picked: 1, icon: "over", v: { 3: "8h", 5: "8h", 6: "8h", 7: "8h", 10: "2h", 11: "0h" } },
  { name: "Clean walls", work: "4 hrs", icon: "assign", v: { 3: "4h" } },
  { name: "Apply paintin", work: "4 hrs", v: { 3: "4h" } },
  { name: "Remove pain", work: "2 hrs", v: { 7: "2h" } },
  { name: "Clean floors", work: "8 hrs", v: { 7: "6h", 10: "2h" } },
  { name: "Inspect work", work: "8 hrs" },
  { name: "Remove floor", work: "8 hrs", v: { 5: "8h" } },
  { name: "Clean walls", work: "8 hrs", v: { 5: "0h", 6: "8h" } },
  { name: "Install new va", work: "10 hrs", v: { 7: "0h", 10: "0h", 11: "0h" } },
  { name: "Inspect all wo", work: "8 hrs" },
  { id: 4, name: "Paint", work: "16", sum: 1, v: { 4: "8", 5: "0", 6: "8" } }
];
const days = ["F", "S", "S", "M", "T", "W", "T", "F", "S", "S", "M", "T", "W"];
const weekend = [1, 2, 8, 9];
const tueThu = [4, 6, 11];
const tri = '<svg width="5" height="5" viewBox="0 0 5 5"><path d="M5 0v5H0z" fill="#333"/></svg>';
const caret = '<svg class="caret" width="8" height="12" viewBox="0 0 8 12"><path d="M1 1h2l1 1 1-1h2M4 2v8M1 11h2l1-1 1 1h2" fill="none" stroke="#333"/></svg>';

document.getElementById("days").insertAdjacentHTML("beforeend", days.map(d => `<th>${d}</th>`).join(""));

document.getElementById("sheet").innerHTML = rows.map(r => {
  const icon = r.icon === "over" ? '<svg width="10" height="14"><use href="#over"/></svg>'
    : r.icon ? '<svg width="13" height="12"><use href="#assign"/></svg>' : "";
  const cls = (r.sum ? "sum" : "child") + (r.picked ? " picked" : "");
  return `<tr class="${cls}"><td>${r.id || ""}</td><td>${icon}</td><td><span class="nm">${r.sum ? tri : ""}${r.name}</span>${r.picked ? caret : ""}</td><td>${r.work}</td><td></td></tr>`;
}).join("");

document.getElementById("usage").innerHTML = rows.map((r, n) => {
  const cells = days.map((_, i) => {
    const idle = weekend.includes(i) || (r.part && tueThu.includes(i));
    const cls = n === 0 && i === 3 ? "cursor" : idle ? "idle" : "";
    return `<td class="${cls}">${(r.v && r.v[i]) || ""}</td>`;
  }).join("");
  const cls = (r.sum ? "sum" : "child") + (r.picked ? " picked" : "") + (n === 0 ? " first" : "");
  return `<tr class="${cls}"><td>Work</td>${cells}</tr>`;
}).join("");
```
